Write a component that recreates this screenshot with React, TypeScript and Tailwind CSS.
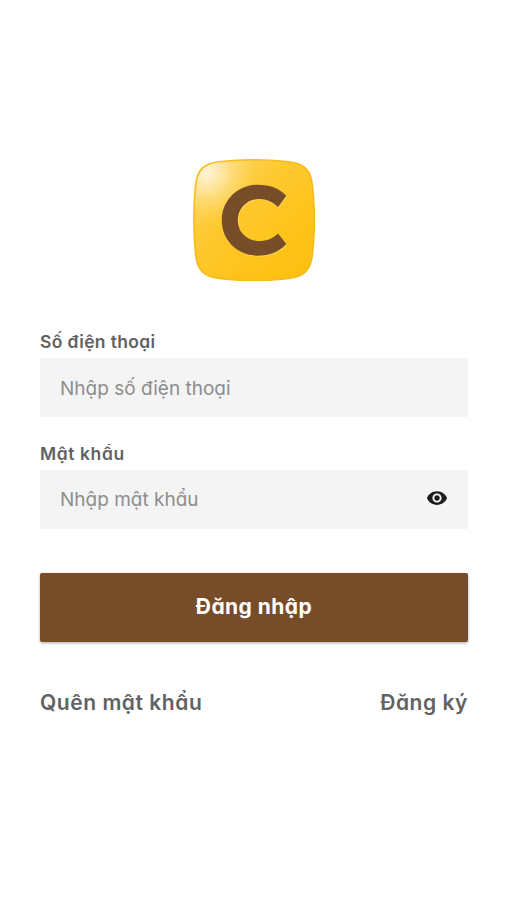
import { useState } from "react";
import { MdVisibility } from "react-icons/md";

const TILE =
  "M26 2.8C48 .3 74 .3 96 2.8C111 4.5 117.8 11 119.4 26C122 49 122 73 119.4 96C117.8 111 111 117.8 96 119.4C74 122.2 48 122.2 26 119.4C11 117.8 4.2 111 2.6 96C.3 73 .3 49 2.6 26C4.2 11 11 4.5 26 2.8Z";
const LETTER =
  "M93.3 36.8C86.5 29.3 77 25.7 65 25.7C44.8 25.7 28.8 41 28.8 61.2S44.8 96.7 65 96.7C77 96.7 86.5 92.5 93.3 85L85 74.4C80 79.4 74 82 66 82C53.8 82 44.8 73 44.8 61.2S53.8 40 66 40C74 40 80 43 85 48.2Z";

function Logo() {
  return (
    <svg className="h-[122px] w-[122px]" viewBox="0 0 122 122" fill="none" aria-label="C">
      <defs>
        <linearGradient id="tile" x1="12" y1="8" x2="108" y2="116" gradientUnits="userSpaceOnUse">
          <stop offset="0" stopColor="#fdd768" />
          <stop offset="0.35" stopColor="#fec931" />
          <stop offset="0.7" stopColor="#fec31b" />
          <stop offset="1" stopColor="#fdc011" />
        </linearGradient>
        <radialGradient id="shine" cx="0" cy="0" r="1" gradientUnits="userSpaceOnUse" gradientTransform="translate(14 14) rotate(45) scale(52 52)">
          <stop offset="0" stopColor="#fff8e8" stopOpacity="0.9" />
          <stop offset="0.35" stopColor="#fff1cc" stopOpacity="0.55" />
          <stop offset="1" stopColor="#fed050" stopOpacity="0" />
        </radialGradient>
      </defs>
      <path d={TILE} fill="url(#tile)" />
      <path d={TILE} fill="url(#shine)" stroke="#f7bb1e" strokeWidth="1.6" />
      <path d={LETTER} fill="#ffd964" transform="translate(.6 .8)" />
      <path d={LETTER} fill="#774d29" />
    </svg>
  );
}

export default function App() {
  const [showPassword, setShowPassword] = useState(false);

  return (
    <main className="min-h-screen bg-white px-10 pt-[159px] font-['Inter',sans-serif] [font-feature-settings:'cv11'] text-[#626262]">
      <div className="flex justify-center">
        <Logo />
      </div>

      <form className="mt-[48px] w-[428px]" onSubmit={(e) => e.preventDefault()}>
        <label htmlFor="phone" className="block h-[29px] text-[17.5px] leading-[25px] font-semibold tracking-[0.33px]">
          Số điện thoại
        </label>
        <input
          id="phone"
          type="tel"
          placeholder="Nhập số điện thoại"
          className="block h-[59px] w-full rounded-xs bg-[#f4f4f4] px-5 pt-0.5 text-[19px] outline-none placeholder:text-[#8d8d8d]"
        />

        <label htmlFor="password" className="mt-6 block h-[29px] text-[17.5px] leading-[25px] font-semibold tracking-[0.6px]">
          Mật khẩu
        </label>
        <div className="flex h-[59px] items-center rounded-xs bg-[#f4f4f4] pr-5 pl-5">
          <input
            id="password"
            type={showPassword ? "text" : "password"}
            placeholder="Nhập mật khẩu"
            className="min-w-0 flex-1 pt-0.5 text-[19px] outline-none placeholder:text-[#8d8d8d]"
          />
          <button type="button" aria-label="Hiện mật khẩu" className="pb-[3px]" onClick={() => setShowPassword(!showPassword)}>
            <MdVisibility className="h-[22px] w-[22px] text-[#1c1c1c]" />
          </button>
        </div>

        <button
          type="submit"
          className="mt-11 block h-[69px] w-full rounded-xs bg-[#774d29] pb-0.5 text-[21px] font-bold tracking-[0.45px] text-white shadow-[0_1px_3px_rgba(0,0,0,0.35)]"
        >
          Đăng nhập
        </button>
      </form>

      <div className="mt-[45px] flex w-[428px] justify-between text-[21px] leading-8 font-semibold tracking-[0.55px]">
        <a href="#forgot">Quên mật khẩu</a>
        <a href="#register">Đăng ký</a>
      </div>
    </main>
  );
}
